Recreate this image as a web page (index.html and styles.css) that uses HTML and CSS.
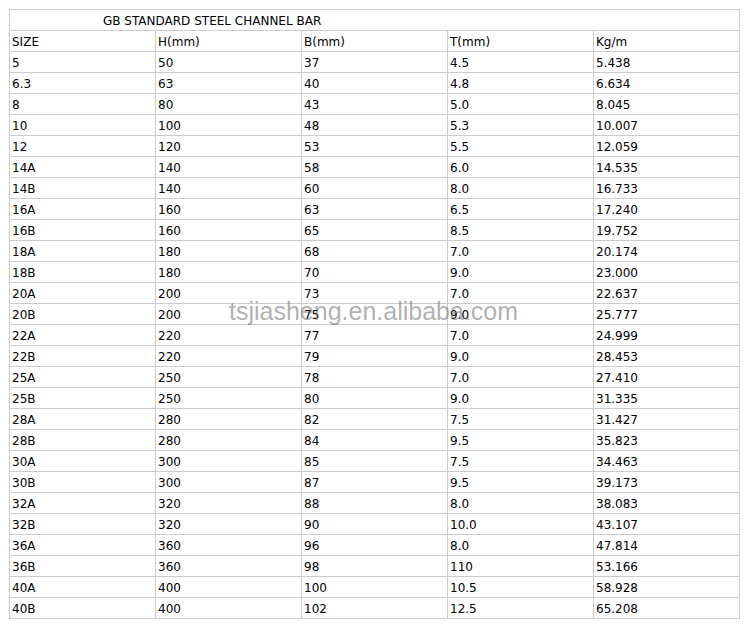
FILE: index.html
```html
<!DOCTYPE html>
<html>
<head>
<meta charset="utf-8">
<link rel="stylesheet" href="styles.css">
</head>
<body>
<div class="page">
<table class="spec">
<tr><td class="title" colspan="5">GB STANDARD STEEL CHANNEL BAR</td></tr>
<tr><td>SIZE</td><td>H(mm)</td><td>B(mm)</td><td>T(mm)</td><td>Kg/m</td></tr>
<tr><td>5</td><td>50</td><td>37</td><td>4.5</td><td>5.438</td></tr>
<tr><td>6.3</td><td>63</td><td>40</td><td>4.8</td><td>6.634</td></tr>
<tr><td>8</td><td>80</td><td>43</td><td>5.0</td><td>8.045</td></tr>
<tr><td>10</td><td>100</td><td>48</td><td>5.3</td><td>10.007</td></tr>
<tr><td>12</td><td>120</td><td>53</td><td>5.5</td><td>12.059</td></tr>
<tr><td>14A</td><td>140</td><td>58</td><td>6.0</td><td>14.535</td></tr>
<tr><td>14B</td><td>140</td><td>60</td><td>8.0</td><td>16.733</td></tr>
<tr><td>16A</td><td>160</td><td>63</td><td>6.5</td><td>17.240</td></tr>
<tr><td>16B</td><td>160</td><td>65</td><td>8.5</td><td>19.752</td></tr>
<tr><td>18A</td><td>180</td><td>68</td><td>7.0</td><td>20.174</td></tr>
<tr><td>18B</td><td>180</td><td>70</td><td>9.0</td><td>23.000</td></tr>
<tr><td>20A</td><td>200</td><td>73</td><td>7.0</td><td>22.637</td></tr>
<tr><td>20B</td><td>200</td><td>75</td><td>9.0</td><td>25.777</td></tr>
<tr><td>22A</td><td>220</td><td>77</td><td>7.0</td><td>24.999</td></tr>
<tr><td>22B</td><td>220</td><td>79</td><td>9.0</td><td>28.453</td></tr>
<tr><td>25A</td><td>250</td><td>78</td><td>7.0</td><td>27.410</td></tr>
<tr><td>25B</td><td>250</td><td>80</td><td>9.0</td><td>31.335</td></tr>
<tr><td>28A</td><td>280</td><td>82</td><td>7.5</td><td>31.427</td></tr>
<tr><td>28B</td><td>280</td><td>84</td><td>9.5</td><td>35.823</td></tr>
<tr><td>30A</td><td>300</td><td>85</td><td>7.5</td><td>34.463</td></tr>
<tr><td>30B</td><td>300</td><td>87</td><td>9.5</td><td>39.173</td></tr>
<tr><td>32A</td><td>320</td><td>88</td><td>8.0</td><td>38.083</td></tr>
<tr><td>32B</td><td>320</td><td>90</td><td>10.0</td><td>43.107</td></tr>
<tr><td>36A</td><td>360</td><td>96</td><td>8.0</td><td>47.814</td></tr>
<tr><td>36B</td><td>360</td><td>98</td><td>110</td><td>53.166</td></tr>
<tr><td>40A</td><td>400</td><td>100</td><td>10.5</td><td>58.928</td></tr>
<tr><td>40B</td><td>400</td><td>102</td><td>12.5</td><td>65.208</td></tr>
</table>
<div class="watermark">tsjiasheng.en.alibaba.com</div>
</div>
</body>
</html>
```
FILE: styles.css
```css
html, body {
  margin: 0;
  padding: 0;
  background: #fff;
}
.page {
  position: relative;
  padding: 9px 0 0 9px;
}
.spec {
  border-collapse: collapse;
  table-layout: fixed;
  width: 731px;
  font-family: "DejaVu Sans", Verdana, sans-serif;
  font-size: 12px;
  color: #000;
}
.spec td {
  border: 1px solid #cccccc;
  height: 18px;
  padding: 2px 1px 0 2px;
  line-height: 18px;
  white-space: nowrap;
  vertical-align: top;
}
.spec td.title {
  padding-left: 93px;
}
.watermark {
  position: absolute;
  left: 229px;
  top: 296px;
  font-family: "Liberation Sans", Arial, sans-serif;
  font-size: 25px;
  line-height: 30px;
  color: rgba(110, 110, 110, 0.55);
  pointer-events: none;
}
```
